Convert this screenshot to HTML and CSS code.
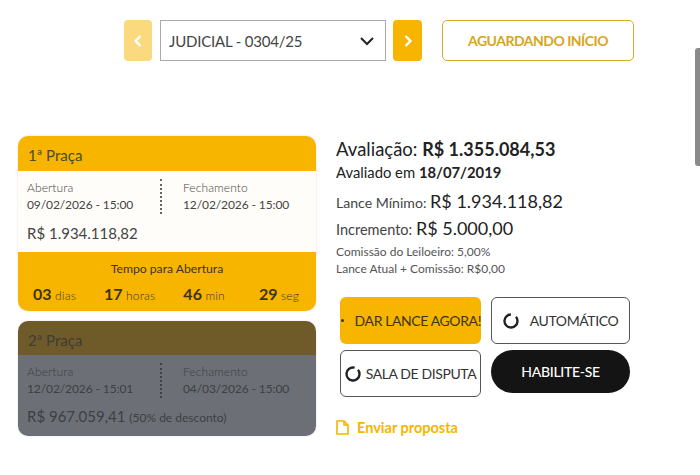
FILE: index.html
```html
<!DOCTYPE html>
<html lang="en">
  <head>
    <meta charset="UTF-8" />
    <title>Leilão</title>
    <link rel="stylesheet" href="styles.css">
  </head>
  <body>
    <div class="topbar">
      <button class="nav-btn nav-disabled">
        <svg width="10" height="14" viewBox="0 0 10 14"><path d="M7.5 2 L2.5 7 L7.5 12" /></svg>
      </button>
      <div class="select-box">
        <span>JUDICIAL - 0304/25</span>
        <svg class="chevron" width="16" height="10" viewBox="0 0 16 10"><path d="M2 2 L8 8 L14 2" /></svg>
      </div>
      <button class="nav-btn">
        <svg width="10" height="14" viewBox="0 0 10 14"><path d="M2.5 2 L7.5 7 L2.5 12" /></svg>
      </button>
      <div class="status">AGUARDANDO INÍCIO</div>
    </div>

    <div class="main">
      <div class="left">
        <div class="card">
          <div class="card-head">1ª Praça</div>
          <div class="card-body">
            <div class="dates">
              <div class="date-col">
                <div class="date-label">Abertura</div>
                <div class="date-value">09/02/2026 - 15:00</div>
              </div>
              <div class="date-col date-right">
                <div class="date-label">Fechamento</div>
                <div class="date-value">12/02/2026 - 15:00</div>
              </div>
            </div>
            <div class="price">R$ 1.934.118,82</div>
          </div>
          <div class="card-foot">
            <div class="foot-title">Tempo para Abertura</div>
            <div class="timer">
              <span><b>03</b> dias</span>
              <span><b>17</b> horas</span>
              <span><b>46</b> min</span>
              <span class="timer-last"><b>29</b> seg</span>
            </div>
          </div>
        </div>

        <div class="card card-off">
          <div class="card-head">2ª Praça</div>
          <div class="card-body">
            <div class="dates">
              <div class="date-col">
                <div class="date-label">Abertura</div>
                <div class="date-value">12/02/2026 - 15:01</div>
              </div>
              <div class="date-col date-right">
                <div class="date-label">Fechamento</div>
                <div class="date-value">04/03/2026 - 15:00</div>
              </div>
            </div>
            <div class="price">R$ 967.059,41 <small>(50% de desconto)</small></div>
          </div>
        </div>
      </div>

      <div class="right">
        <div class="eval">Avaliação: <b>R$ 1.355.084,53</b></div>
        <div class="eval-date">Avaliado em <b>18/07/2019</b></div>
        <div class="line line-min">Lance Mínimo: <span>R$ 1.934.118,82</span></div>
        <div class="line line-inc">Incremento: <span>R$ 5.000,00</span></div>
        <div class="note note-first">Comissão do Leiloeiro: 5,00%</div>
        <div class="note">Lance Atual + Comissão: R$0,00</div>

        <div class="actions">
          <button class="btn btn-bid"><i class="dot"></i>DAR LANCE AGORA!</button>
          <button class="btn btn-outline btn-auto">
            <svg class="spinner" width="16" height="16" viewBox="0 0 16 16"><circle cx="8" cy="8" r="6.5" pathLength="100" stroke-dasharray="86 14" /></svg>
            AUTOMÁTICO
          </button>
          <button class="btn btn-outline btn-room">
            <svg class="spinner" width="16" height="16" viewBox="0 0 16 16"><circle cx="8" cy="8" r="6.5" pathLength="100" stroke-dasharray="90 10" /></svg>
            SALA DE DISPUTA
          </button>
          <button class="btn btn-dark">HABILITE-SE</button>
        </div>

        <a class="proposal" href="#">
          <svg width="13" height="15" viewBox="0 0 13 15"><path d="M1 1 H8 L12 5 V14 H1 Z M8 1 V5 H12" /></svg>
          Enviar proposta
        </a>
      </div>
    </div>

    <div class="scroll-thumb"></div>
  </body>
</html>
```

FILE: styles.css
```css
html, body {
  height: 475px;
  overflow: hidden;
}
body {
  font-family: Lato, "Open Sans", sans-serif;
  background-color: #fff;
  color: #333;
  margin: 0;
}
.topbar {
  display: flex;
  align-items: stretch;
  height: 41px;
  padding: 20px 0 0 124px;
}
.nav-btn {
  width: 29px;
  padding: 0;
  border: none;
  border-radius: 4px;
  background-color: #f7b500;
  display: flex;
  align-items: center;
  justify-content: center;
}
.nav-btn path {
  fill: none;
  stroke: #fff;
  stroke-width: 2.4;
}
.nav-disabled {
  width: 28px;
  background-color: #fad97f;
}
.select-box {
  width: 226px;
  margin: 0 7px 0 8px;
  border: 1px solid #aaa;
  display: flex;
  align-items: center;
  justify-content: space-between;
  padding: 0 10px 0 8px;
  font-size: 15px;
  letter-spacing: -0.2px;
  color: #444;
  box-sizing: border-box;
}
.chevron path {
  fill: none;
  stroke: #222;
  stroke-width: 2;
}
.status {
  width: 192px;
  margin-left: 20px;
  border: 1px solid #d9ab2b;
  border-radius: 5px;
  box-sizing: border-box;
  display: flex;
  align-items: center;
  justify-content: center;
  font-size: 14px;
  font-weight: 700;
  letter-spacing: -0.5px;
  color: #d6a520;
}
.main {
  display: flex;
  padding: 75px 0 0 18px;
}
.left {
  width: 298px;
}
.card {
  border-radius: 10px;
  overflow: hidden;
  margin-bottom: 10px;
  box-shadow: 0 0 2px rgba(0, 0, 0, 0.15);
}
.card-head {
  height: 35px;
  line-height: 38px;
  padding-left: 10px;
  background-color: #f7b500;
  font-size: 15px;
  color: #4a4a3a;
}
.card-body {
  background-color: #fffdfa;
  padding: 8px 9px 0;
  height: 73px;
}
.dates {
  display: flex;
}
.date-col {
  flex: none;
  width: 133px;
  height: 35px;
}
.date-right {
  border-left: 2px dotted #666;
  padding-left: 21px;
  width: 110px;
}
.date-label {
  font-size: 12px;
  font-weight: 300;
  letter-spacing: 0.1px;
  line-height: 17px;
  color: #444;
}
.date-value {
  font-size: 12px;
  letter-spacing: -0.1px;
  line-height: 17px;
  color: #444;
}
.price {
  font-size: 15px;
  margin-top: 10px;
  color: #444;
}
.price small {
  font-size: 12px;
}
.card-foot {
  background-color: #f7b500;
  height: 59px;
  padding-top: 9px;
  box-sizing: border-box;
  color: #3a3520;
}
.foot-title {
  text-align: center;
  font-size: 12.2px;
}
.timer {
  display: flex;
  gap: 28px;
  padding: 8px 17px 0 15px;
  font-size: 12px;
  font-weight: 300;
  letter-spacing: 0.2px;
}
.timer-last {
  margin-left: auto;
}
.timer b {
  font-size: 16px;
  font-weight: 700;
  letter-spacing: 0;
  color: #3d3416;
}
.card-off .card-head {
  background-color: #6f5b2a;
  color: #3e3d38;
  height: 34px;
}
.card-off .card-body {
  background-color: #6c7076;
}
.card-off .date-label,
.card-off .date-value,
.card-off .price {
  color: #3c3f44;
}
.card-off .date-right {
  border-left-color: #3c3f44;
}
.card-off .price {
  margin-top: 9px;
}
.right {
  padding-left: 20px;
  width: 300px;
}
.eval {
  font-size: 18.5px;
  line-height: 26px;
  color: #222;
}
.eval b {
  font-size: 18px;
}
.eval-date {
  font-size: 14.8px;
  line-height: 20px;
  color: #222;
}
.line {
  color: #444;
}
.line span {
  font-size: 18px;
  color: #222;
}
.line-min {
  font-size: 14.1px;
  margin-top: 6px;
  line-height: 26px;
}
.line-inc {
  font-size: 14.5px;
  line-height: 25px;
}
.note {
  font-size: 12px;
  line-height: 17px;
  color: #555;
}
.note-first {
  margin-top: 1px;
}
.actions {
  display: grid;
  grid-template-columns: 141px 139px;
  column-gap: 10px;
  row-gap: 6px;
  margin: 20px 0 0 4px;
}
.btn {
  height: 47px;
  padding: 0;
  font-family: inherit;
  font-size: 14px;
  letter-spacing: -0.4px;
  border-radius: 6px;
  display: flex;
  align-items: center;
  justify-content: center;
}
.btn-bid {
  background-color: #f7b500;
  border: none;
  color: #3d3416;
  position: relative;
  justify-content: flex-end;
}
.dot {
  position: absolute;
  left: 1px;
  top: 22px;
  width: 3px;
  height: 3px;
  border-radius: 50%;
  background-color: #3d3416;
}
.btn-outline {
  background-color: #fff;
  border: 1px solid #555;
  color: #333;
}
.spinner {
  transform: rotate(-40deg);
}
.spinner circle {
  fill: none;
  stroke: #222;
  stroke-width: 2.4;
}
.btn-auto .spinner {
  margin-right: 11px;
}
.btn-room .spinner {
  margin-right: 5px;
}
.btn-dark {
  height: 43px;
  background-color: #141414;
  border: none;
  border-radius: 22px;
  color: #fff;
  font-weight: 500;
  letter-spacing: -0.3px;
}
.proposal {
  display: inline-flex;
  align-items: center;
  gap: 8px;
  margin-top: 22px;
  font-size: 14.5px;
  font-weight: 700;
  color: #f7b500;
  text-decoration: none;
}
.proposal path {
  fill: none;
  stroke: #f7b500;
  stroke-width: 1.6;
}
.scroll-thumb {
  position: fixed;
  right: 0;
  top: 48px;
  width: 5px;
  height: 118px;
  background-color: #8a8a8a;
  border-radius: 3px 0 0 3px;
}
```
